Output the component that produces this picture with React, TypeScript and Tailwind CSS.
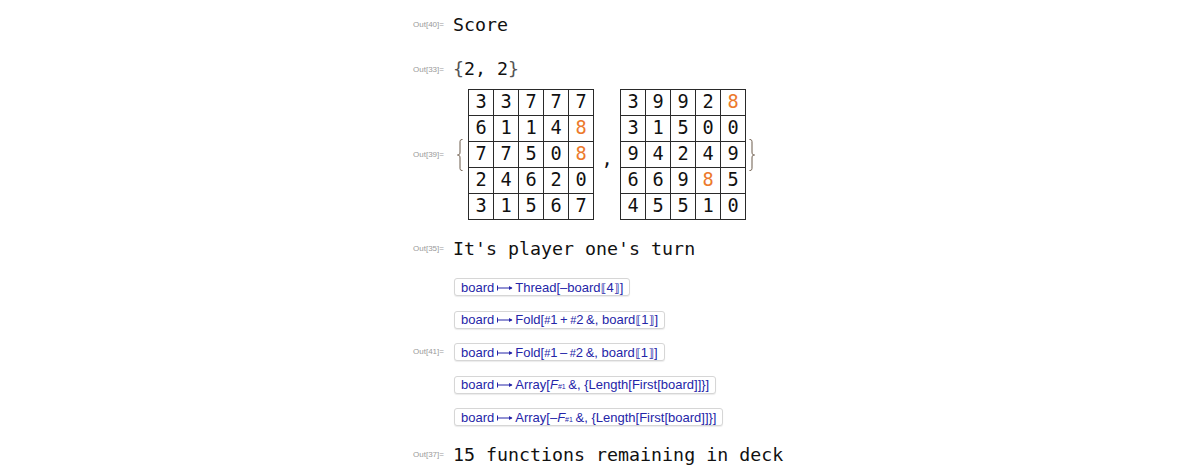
import React from "react";

const mono = { fontFamily: '"DejaVu Sans Mono", monospace' };

const Label = ({ n }: { n: number }) => (
  <div
    className="w-[40px] shrink-0 text-[8px] leading-none text-[#9a9a9a]"
    style={{ fontFamily: '"Liberation Sans", Arial, sans-serif' }}
  >
    Out[{n}]=
  </div>
);

const g1 = [
  ["3", "3", "7", "7", "7"],
  ["6", "1", "1", "4", "8"],
  ["7", "7", "5", "0", "8"],
  ["2", "4", "6", "2", "0"],
  ["3", "1", "5", "6", "7"],
];
const g2 = [
  ["3", "9", "9", "2", "8"],
  ["3", "1", "5", "0", "0"],
  ["9", "4", "2", "4", "9"],
  ["6", "6", "9", "8", "5"],
  ["4", "5", "5", "1", "0"],
];

const Grid = ({ data }: { data: string[][] }) => (
  <div className="grid grid-cols-[repeat(5,24px)] gap-px border border-[#2a2a2a] bg-[#2a2a2a]">
    {data.flat().map((d, i) => (
      <div
        key={i}
        className={`flex h-[25px] items-center justify-center bg-white text-[18.6px] leading-none ${
          d === "8" ? "text-[#ec7a2c]" : "text-[#111]"
        }`}
        style={mono}
      >
        {d}
      </div>
    ))}
  </div>
);

const Brace = ({ right }: { right?: boolean }) => (
  <svg width="6" height="32" viewBox="0 0 6 32" className={right ? "scale-x-[-1]" : ""}>
    <path
      d="M5.5 0.5 C3 0.5 3 1.5 3 4 L3 13 C3 15 2.5 16 0.5 16 C2.5 16 3 17 3 19 L3 28 C3 30.5 3 31.5 5.5 31.5"
      fill="none"
      stroke="#6b5a4a"
      strokeWidth="1"
    />
  </svg>
);

const Btn = ({ children }: { children: React.ReactNode }) => (
  <div
    className="flex h-[18px] w-fit items-center rounded-[3px] border border-[#d6d6d6] bg-white pl-[6px] pr-[6px] text-[13px] leading-none text-[#2525a8] shadow-[0_1px_1px_rgba(0,0,0,0.08)]"
    style={{ fontFamily: '"Liberation Sans", "DejaVu Sans", Arial, sans-serif' }}
  >
    <span className="whitespace-pre">{children}</span>
  </div>
);

const Arrow = () => (
  <svg width="16" height="6" viewBox="0 0 16 6" className="mx-[2.5px] inline-block align-[1px]">
    <path d="M0.5 0.5 V5.5 M0.5 3 H15" stroke="currentColor" strokeWidth="1" fill="none" />
    <path d="M12 1 L15.5 3 L12 5 Z" fill="currentColor" />
  </svg>
);
const LB = () => (
  <span className="inline-block w-[6px] text-center font-bold" style={{ fontFamily: '"DejaVu Sans", sans-serif', fontSize: 11 }}>⟦</span>
);
const RB = () => (
  <span className="inline-block w-[6px] text-center font-bold" style={{ fontFamily: '"DejaVu Sans", sans-serif', fontSize: 11 }}>⟧</span>
);
const H = () => <span className="inline-block w-[6px] text-center text-[11px]">#</span>;
const T = "\u2009";

export default function App() {
  return (
    <div className="h-[471px] w-[1200px] overflow-hidden bg-white pl-[413px]">
      <div className="flex h-[50px] items-center">
        <Label n={40} />
        <div className="text-[18.3px] leading-none text-[#111]" style={mono}>
          Score
        </div>
      </div>
      <div className="flex h-[39px] items-center">
        <Label n={33} />
        <div className="text-[18.3px] leading-none text-[#111]" style={mono}>
          <span className="text-[#555]">{"{"}</span>2, 2<span className="text-[#555]">{"}"}</span>
        </div>
      </div>
      <div className="flex h-[131px] items-center">
        <Label n={39} />
        <div className="flex items-center">
          <div className="ml-[4px] mr-[5px] flex"><Brace /></div>
          <Grid data={g1} />
          <div className="flex w-[26px] justify-center pt-[10px] text-[18.6px] leading-none text-[#111]" style={mono}>,</div>
          <Grid data={g2} />
          <div className="ml-[3px] flex"><Brace right /></div>
        </div>
      </div>
      <div className="flex h-[58px] items-center">
        <Label n={35} />
        <div className="text-[18.3px] leading-none text-[#111]" style={mono}>
          It's player one's turn
        </div>
      </div>
      <div className="flex flex-col gap-[14.5px]">
        <div className="flex items-center">
          <div className="w-[41px] shrink-0" />
          <Btn>
            board<Arrow />Thread[–board<LB />4<RB />]
          </Btn>
        </div>
        <div className="flex items-center">
          <div className="w-[41px] shrink-0" />
          <Btn>
            board<Arrow />Fold[<H />1{T}+{T}<H />2{T}&amp;, board<LB />1<RB />]
          </Btn>
        </div>
        <div className="flex items-center">
          <div className="w-[41px] shrink-0">
            <Label n={41} />
          </div>
          <Btn>
            board<Arrow />Fold[<H />1{T}–{T}<H />2{T}&amp;, board<LB />1<RB />]
          </Btn>
        </div>
        <div className="flex items-center">
          <div className="w-[41px] shrink-0" />
          <Btn>
            board<Arrow />Array[<i>F</i><span className="text-[7px]">#1</span>{T}&amp;, {"{"}Length[First[board]]{"}"}]
          </Btn>
        </div>
        <div className="flex items-center">
          <div className="w-[41px] shrink-0" />
          <Btn>
            board<Arrow />Array[–<i>F</i><span className="text-[7px]">#1</span>{T}&amp;, {"{"}Length[First[board]]{"}"}]
          </Btn>
        </div>
      </div>
      <div className="flex h-[58px] items-center">
        <Label n={37} />
        <div className="text-[18.3px] leading-none text-[#111]" style={mono}>
          15 functions remaining in deck
        </div>
      </div>
    </div>
  );
}
